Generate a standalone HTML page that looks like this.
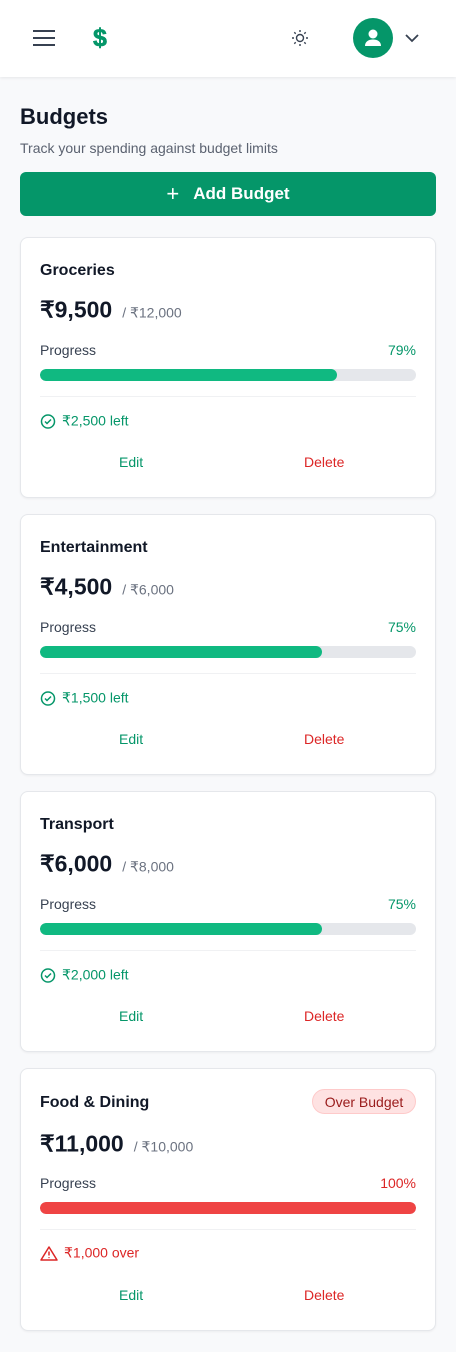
<!DOCTYPE html><html><head><meta charset="utf-8"><style>
*{box-sizing:border-box;margin:0;padding:0}
body{width:456px;height:1352px;background:#f8f9fb;font-family:"Liberation Sans",sans-serif;position:relative;overflow:hidden;color:#111827}
.hdr{position:absolute;left:0;top:0;width:456px;height:77px;background:#fff;box-shadow:0 1px 3px rgba(0,0,0,.08)}
.a{position:absolute}
.card{position:absolute;left:20px;width:416px;background:#fff;border:1px solid #e5e7eb;border-radius:8px;box-shadow:0 1px 2px rgba(0,0,0,.05)}
.c{position:absolute;transform:translateY(-50%);white-space:nowrap}
.t{left:19px;font-size:16px;font-weight:bold;color:#111827}
.amt{left:19px;font-size:23px;font-weight:bold}
.amt span{font-size:14px;font-weight:normal;color:#6b7280;margin-left:10px}
.pl{left:19px;font-size:14px;color:#374151}
.pp{right:19px;font-size:14px;color:#059669}
.track{position:absolute;left:19px;width:376px;height:12px;border-radius:6px;background:#e5e7eb;overflow:hidden}
.fill{height:12px;border-radius:6px;background:#10b981}
.div{position:absolute;left:19px;width:376px;height:1px;background:#f0f1f3}
.st{left:19px;font-size:14px;color:#059669;display:flex;align-items:center;gap:6px}
.ed{left:98px;font-size:14px;color:#059669}
.de{left:283px;font-size:14px;color:#dc2626}
</style></head><body>
<div class="hdr">
<svg class="a" style="left:32px;top:29px" width="24" height="18" viewBox="0 0 24 18"><path d="M1 2h22M1 9h22M1 16h22" stroke="#374151" stroke-width="2"/></svg>
<div class="a" style="left:93px;top:24px;font-size:25px;font-weight:bold;color:#059669;-webkit-text-stroke:0.6px #059669">$</div>
<svg class="a" style="left:291px;top:29px" width="18" height="18" viewBox="0 0 18 18" fill="none" stroke="#374151" stroke-width="1.4"><circle cx="9" cy="9" r="3.5"/><path d="M9 1v2M9 15v2M1 9h2M15 9h2M3.3 3.3l1.4 1.4M13.3 13.3l1.4 1.4M3.3 14.7l1.4-1.4M13.3 4.7l1.4-1.4"/></svg>
<div class="a" style="left:353px;top:18px;width:40px;height:40px;border-radius:50%;background:#059669"></div>
<svg class="a" style="left:361px;top:26px" width="24" height="24" viewBox="0 0 24 24" fill="#fff"><circle cx="12" cy="8" r="4.5"/><path d="M4 20c0-4.5 3.5-6.5 8-6.5s8 2 8 6.5z"/></svg>
<svg class="a" style="left:404px;top:33px" width="16" height="10" viewBox="0 0 16 10"><path d="M2 2l6 6 6-6" stroke="#374151" stroke-width="1.8" fill="none"/></svg>
</div>
<div class="c" style="left:20px;top:117px;font-size:22px;font-weight:bold">Budgets</div>
<div class="c" style="left:20px;top:148px;font-size:14px;color:#5b6270">Track your spending against budget limits</div>
<div class="a" style="left:20px;top:172px;width:416px;height:44px;background:#059669;border-radius:6px;color:#fff;font-size:17px;font-weight:bold;display:flex;align-items:center;justify-content:center"><span style="font-weight:normal;font-size:22px;margin-right:14px">+</span>Add Budget</div>

<div class="card" style="top:237px;height:261px">
<div class="c t" style="top:33px">Groceries</div>
<div class="c amt" style="top:72px">₹9,500<span>/ ₹12,000</span></div>
<div class="c pl" style="top:112px">Progress</div><div class="c pp" style="top:112px">79%</div>
<div class="track" style="top:131px"><div class="fill" style="width:79%"></div></div>
<div class="div" style="top:158px"></div>
<div class="c st" style="top:183px"><svg width="16" height="16" viewBox="0 0 16 16" fill="none" stroke="#059669" stroke-width="1.5"><circle cx="8" cy="8" r="6.5"/><path d="M5 8l2 2 4-4"/></svg>₹2,500 left</div>
<div class="c ed" style="top:224px">Edit</div><div class="c de" style="top:224px">Delete</div>
</div>

<div class="card" style="top:514px;height:261px">
<div class="c t" style="top:33px">Entertainment</div>
<div class="c amt" style="top:72px">₹4,500<span>/ ₹6,000</span></div>
<div class="c pl" style="top:112px">Progress</div><div class="c pp" style="top:112px">75%</div>
<div class="track" style="top:131px"><div class="fill" style="width:75%"></div></div>
<div class="div" style="top:158px"></div>
<div class="c st" style="top:183px"><svg width="16" height="16" viewBox="0 0 16 16" fill="none" stroke="#059669" stroke-width="1.5"><circle cx="8" cy="8" r="6.5"/><path d="M5 8l2 2 4-4"/></svg>₹1,500 left</div>
<div class="c ed" style="top:224px">Edit</div><div class="c de" style="top:224px">Delete</div>
</div>

<div class="card" style="top:791px;height:261px">
<div class="c t" style="top:33px">Transport</div>
<div class="c amt" style="top:72px">₹6,000<span>/ ₹8,000</span></div>
<div class="c pl" style="top:112px">Progress</div><div class="c pp" style="top:112px">75%</div>
<div class="track" style="top:131px"><div class="fill" style="width:75%"></div></div>
<div class="div" style="top:158px"></div>
<div class="c st" style="top:183px"><svg width="16" height="16" viewBox="0 0 16 16" fill="none" stroke="#059669" stroke-width="1.5"><circle cx="8" cy="8" r="6.5"/><path d="M5 8l2 2 4-4"/></svg>₹2,000 left</div>
<div class="c ed" style="top:224px">Edit</div><div class="c de" style="top:224px">Delete</div>
</div>

<div class="card" style="top:1068px;height:263px">
<div class="c t" style="top:34px">Food &amp; Dining</div>
<div class="a" style="left:291px;top:20px;width:104px;height:25px;border-radius:13px;background:#fee2e2;border:1px solid #fecaca;color:#991b1b;font-size:14px;display:flex;align-items:center;justify-content:center">Over Budget</div>
<div class="c amt" style="top:75px">₹11,000<span>/ ₹10,000</span></div>
<div class="c pl" style="top:114px">Progress</div><div class="c pp" style="top:114px;color:#dc2626">100%</div>
<div class="track" style="top:133px"><div class="fill" style="width:100%;background:#ef4444"></div></div>
<div class="div" style="top:160px"></div>
<div class="c st" style="top:184px;color:#dc2626"><svg width="18" height="16" viewBox="0 0 18 16" fill="none" stroke="#dc2626" stroke-width="1.5"><path d="M9 1.5L1 14.5h16z" stroke-linejoin="round"/><path d="M9 6v4M9 11.8v.8"/></svg>₹1,000 over</div>
<div class="c ed" style="top:226px">Edit</div><div class="c de" style="top:226px">Delete</div>
</div>
</body></html>
